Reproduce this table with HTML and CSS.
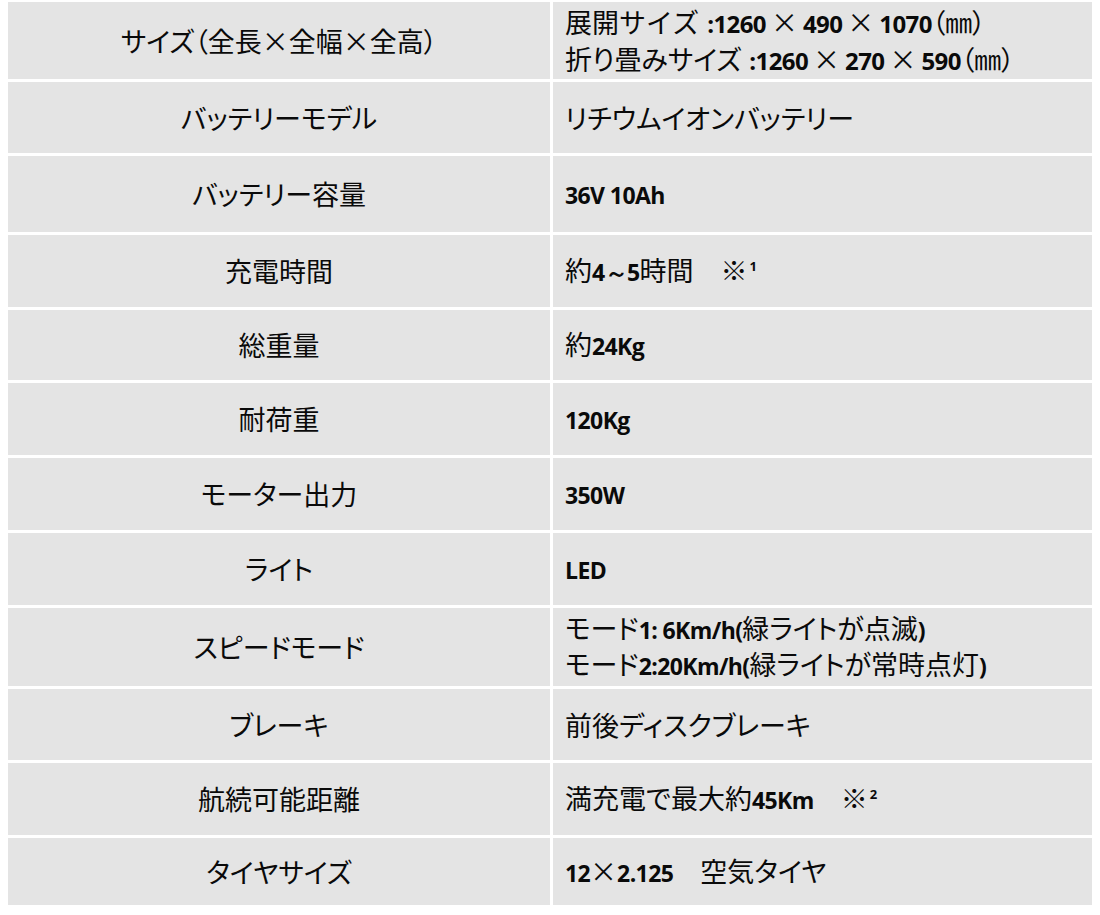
FILE: index.html
```html
<!DOCTYPE html>
<html lang="ja">
<head>
<meta charset="utf-8">
<link rel="stylesheet" href="styles.css">
</head>
<body>
<div class="spec">
  <div class="cell label"><span>サイズ（全長×全幅×全高）</span></div>
  <div class="cell value wide"><div class="line"><span class="mono">展開サイズ</span><b class="colon">:1260</b><span class="x">×</span><b>490</b><span class="x">×</span><b>1070</b>（㎜）</div><div class="line">折り畳みサイズ<b class="colon">:1260</b><span class="x">×</span><b>270</b><span class="x">×</span><b>590</b>（㎜）</div></div>

  <div class="cell label"><span>バッテリーモデル</span></div>
  <div class="cell value"><div class="line">リチウムイオンバッテリー</div></div>

  <div class="cell label"><span>バッテリー容量</span></div>
  <div class="cell value"><div class="line"><b>36V 10Ah</b></div></div>

  <div class="cell label"><span>充電時間</span></div>
  <div class="cell value"><div class="line">約<b>4～5</b>時間　※<sup>1</sup></div></div>

  <div class="cell label"><span>総重量</span></div>
  <div class="cell value"><div class="line">約<b>24Kg</b></div></div>

  <div class="cell label"><span>耐荷重</span></div>
  <div class="cell value"><div class="line"><b>120Kg</b></div></div>

  <div class="cell label"><span>モーター出力</span></div>
  <div class="cell value"><div class="line"><b>350W</b></div></div>

  <div class="cell label"><span>ライト</span></div>
  <div class="cell value"><div class="line"><b>LED</b></div></div>

  <div class="cell label"><span>スピードモード</span></div>
  <div class="cell value"><div class="line">モード<b>1: 6Km/h(</b>緑ライトが点滅<b>)</b></div><div class="line">モード<b>2:20Km/h(</b>緑ライトが常時点灯<b>)</b></div></div>

  <div class="cell label"><span>ブレーキ</span></div>
  <div class="cell value"><div class="line">前後ディスクブレーキ</div></div>

  <div class="cell label"><span>航続可能距離</span></div>
  <div class="cell value"><div class="line">満充電で最大約<b>45Km</b>　※<sup>2</sup></div></div>

  <div class="cell label"><span>タイヤサイズ</span></div>
  <div class="cell value"><div class="line"><b>12</b>×<b>2.125</b>　空気タイヤ</div></div>
</div>
</body>
</html>
```

FILE: styles.css
```css
html, body {
  margin: 0;
  padding: 0;
  background: #ffffff;
}
body {
  padding: 2px 0 0 8px;
  font-family: "Noto Sans CJK JP", "Noto Sans", sans-serif;
  color: #0a0a0a;
}
.spec {
  display: grid;
  width: 1084px;
  grid-template-columns: 542px 539px;
  grid-template-rows: 77px 71px 76px 72px 70px 72px 72px 72px 78px 71px 72px 67px;
  column-gap: 3px;
  row-gap: 3px;
}
.cell {
  background: #e4e4e4;
  display: flex;
  flex-direction: column;
  justify-content: center;
  font-size: 27px;
  line-height: 34px;
  font-feature-settings: "palt";
  white-space: nowrap;
}
.label {
  align-items: center;
  text-align: center;
}
.value {
  padding-left: 12px;
  align-items: flex-start;
}
.wide {
  line-height: 35px;
}
.line {
  display: block;
}
.mono {
  font-feature-settings: normal;
}
.value b {
  font-family: "Open Sans", "Noto Sans", sans-serif;
  font-weight: 700;
  font-size: 23px;
  letter-spacing: -0.6px;
}
.wide b {
  font-size: 24px;
}
.colon {
  margin-left: 8px;
}
.x {
  margin: 0 5px;
}
.value sup {
  font-family: "Open Sans", sans-serif;
  font-size: 13px;
  font-weight: 700;
  line-height: 0;
  vertical-align: 10px;
  margin-left: 2px;
}
```
